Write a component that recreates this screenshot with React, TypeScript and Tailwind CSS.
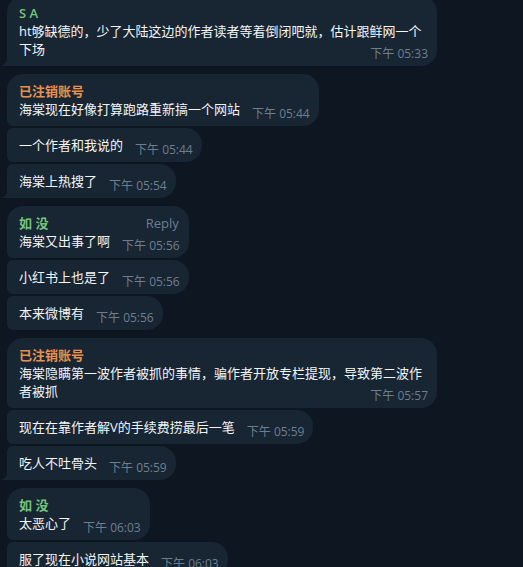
import React from "react";

type Msg = {
  name?: string;
  color?: string;
  lines: string[];
  time: string;
  wide?: boolean;
  first?: boolean;
  tail?: boolean;
  reply?: boolean;
};

const GREEN = "text-[#73c57c]";
const ORANGE = "text-[#e8924d]";

const messages: Msg[] = [
  {
    name: "S A",
    color: GREEN,
    lines: ["ht够缺德的，少了大陆这边的作者读者等着倒闭吧就，估计跟鲜网一个", "下场"],
    time: "下午 05:33",
    wide: true,
    first: true,
    tail: true,
  },
  { name: "已注销账号", color: ORANGE, lines: ["海棠现在好像打算跑路重新搞一个网站"], time: "下午 05:44", first: true },
  { lines: ["一个作者和我说的"], time: "下午 05:44" },
  { lines: ["海棠上热搜了"], time: "下午 05:54", tail: true },
  { name: "如 没", color: GREEN, lines: ["海棠又出事了啊"], time: "下午 05:56", first: true, reply: true },
  { lines: ["小红书上也是了"], time: "下午 05:56" },
  { lines: ["本来微博有"], time: "下午 05:56" },
  {
    name: "已注销账号",
    color: ORANGE,
    lines: ["海棠隐瞒第一波作者被抓的事情，骗作者开放专栏提现，导致第二波作", "者被抓"],
    time: "下午 05:57",
    wide: true,
    first: true,
  },
  { lines: ["现在在靠作者解V的手续费捞最后一笔"], time: "下午 05:59" },
  { lines: ["吃人不吐骨头"], time: "下午 05:59", tail: true },
  { name: "如 没", color: GREEN, lines: ["太恶心了"], time: "下午 06:03", first: true },
  { lines: ["服了现在小说网站基本"], time: "下午 06:03" },
];

function Bubble({ m }: { m: Msg }) {
  const last = m.lines[m.lines.length - 1];
  const rest = m.lines.slice(0, -1);
  return (
    <div
      className={`relative self-start bg-[#182533] pl-3 pr-[9px] pt-2 pb-2 rounded-r-[16px] ${
        m.first ? "mt-2 rounded-tl-[16px]" : "mt-[2px] rounded-tl-[6px]"
      } ${m.tail ? "rounded-bl-none" : "rounded-bl-[6px]"} ${m.wide ? "w-[430px]" : ""}`}
    >
      {m.name && (
        <div className="flex items-center justify-between leading-[18px]">
          <span className={`text-[13px] font-semibold ${m.color}`}>{m.name}</span>
          {m.reply && <span className="text-[13px] text-[#6d7f8f] mr-[1px]">Reply</span>}
        </div>
      )}
      {rest.map((l, i) => (
        <div key={i} className="text-[13px] leading-[18px] text-[#f3f5f7] whitespace-nowrap">
          {l}
        </div>
      ))}
      <div className="flex items-end justify-between">
        <span className="text-[13px] leading-[18px] text-[#f3f5f7] whitespace-nowrap">{last}</span>
        <span className="ml-3 text-[12px] leading-[16px] text-[#6d7f8f] whitespace-nowrap translate-y-[4px]">
          {m.time}
        </span>
      </div>
      {m.tail && (
        <svg className="absolute -left-[6px] bottom-0" width="7" height="10" viewBox="0 0 7 10">
          <path d="M7 0 C7 5 4 8.5 0 10 L7 10 Z" fill="#182533" />
        </svg>
      )}
    </div>
  );
}

export default function App() {
  return (
    <div
      className="h-[567px] w-full overflow-hidden bg-[#0e1621]"
      style={{ fontFamily: '"Open Sans", "Noto Sans CJK SC", sans-serif' }}
    >
      <div className="flex flex-col pl-[7px] -mt-3">
        {messages.map((m, i) => (
          <Bubble key={i} m={m} />
        ))}
      </div>
    </div>
  );
}
